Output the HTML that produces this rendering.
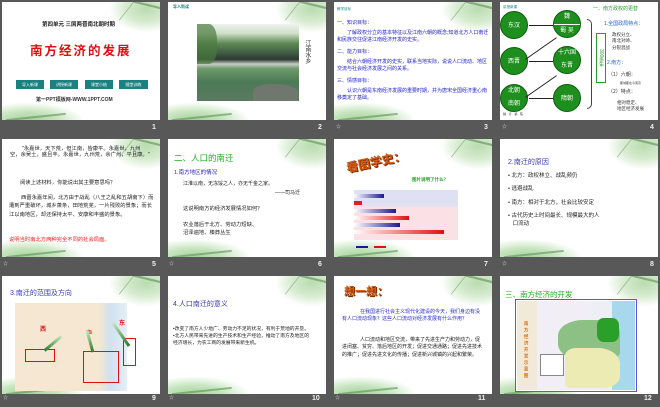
<!DOCTYPE html>
<html><head><meta charset="utf-8"><style>
*{margin:0;padding:0;box-sizing:border-box}
body{width:660px;height:407px;background:#585858;position:relative;overflow:hidden;font-family:"Liberation Sans","Noto Sans CJK SC",sans-serif}
.s{position:absolute;width:158px;height:118px;background:#fff;overflow:hidden}
.s .tr{position:absolute;right:-10px;top:-12px;width:60px;height:42px;background:radial-gradient(ellipse at 60% 45%,#b9dcb0 0%,#d6ebcf 40%,rgba(255,255,255,0) 72%)}
.s .tr:after{content:"";position:absolute;left:14px;top:14px;width:34px;height:18px;border-top:2px solid #6c9a66;border-left:1px solid #7aa873;transform:skewX(-30deg) rotate(12deg);opacity:.7}
.s .bl{position:absolute;left:-12px;bottom:-10px;width:95px;height:28px;background:radial-gradient(ellipse at 40% 70%,#9fcf96 0%,#c8e6c0 38%,rgba(255,255,255,0) 70%)}
.s .bl:after{content:"";position:absolute;left:16px;top:14px;width:60px;height:3px;border-top:2px solid #5e8f5a;transform:rotate(-6deg);opacity:.6}
.n{position:absolute;color:#eee;font-size:7px;font-weight:bold}
.t{position:absolute;white-space:nowrap;line-height:1.15}
.c{position:absolute;width:28px;height:28px;border-radius:50%;background:#1e8f1e;border:1px solid #0b5e0b;color:#fff;font-size:6px;text-align:center;line-height:28px}
</style></head><body>

<!-- slide 1 -->
<div class="s" style="left:2px;top:2px"><div class="tr"></div><div class="bl"></div>
<div class="t" style="left:40px;top:20px;font-size:5.5px;font-weight:bold;color:#222">第四单元 三国两晋南北朝时期</div>
<div class="t" style="left:28px;top:42px;font-size:12.5px;font-weight:bold;color:#e01010;letter-spacing:2px">南方经济的发展</div>
<div style="position:absolute;left:14px;top:78px;width:28px;height:9px;background:#1a8080;color:#fff;font-size:4px;text-align:center;line-height:9px">导入新课</div>
<div style="position:absolute;left:48px;top:78px;width:28px;height:9px;background:#1a8080;color:#fff;font-size:4px;text-align:center;line-height:9px">讲授新课</div>
<div style="position:absolute;left:83px;top:78px;width:28px;height:9px;background:#1a8080;color:#fff;font-size:4px;text-align:center;line-height:9px">课堂小结</div>
<div style="position:absolute;left:117px;top:78px;width:29px;height:9px;background:#1a8080;color:#fff;font-size:4px;text-align:center;line-height:9px">随堂训练</div>
<div class="t" style="left:34px;top:96px;font-size:5px;font-weight:bold;color:#333">第一PPT模板网-WWW.1PPT.COM</div>
</div>
<div class="n" style="left:152px;top:124px">1</div>

<!-- slide 2 -->
<div class="s" style="left:168px;top:2px"><div class="tr"></div><div class="bl"></div>
<div class="t" style="left:5px;top:3px;font-size:4px;color:#1a8080;font-weight:bold">导入新课</div>
<div style="position:absolute;left:29px;top:22px;width:102px;height:77px;background:linear-gradient(180deg,#eef2ee 0%,#cfe0c8 12%,#5f8a55 25%,#3f5a44 38%,#2a3a30 46%,#c8ccc6 52%,#6e9a6c 58%,#4c7a55 75%,#5a7a60 100%)"></div>
<div style="position:absolute;left:29px;top:22px;width:20px;height:40px;background:#4a7a3e;opacity:.7;border-radius:0 40% 40% 0"></div>
<div style="position:absolute;left:85px;top:82px;width:45px;height:17px;background:#6f776f;border-radius:40% 50% 0 0"></div>
<div class="t" style="left:135px;top:38px;font-size:6px;color:#333;writing-mode:vertical-rl">江南水乡</div>
</div>
<div class="n" style="left:318px;top:124px">2</div>

<!-- slide 3 -->
<div class="s" style="left:334px;top:2px"><div class="tr"></div><div class="bl"></div>
<div class="t" style="left:3px;top:5px;font-size:3.5px;color:#1a8080">教学目标</div>
<div class="t" style="left:3px;top:19px;font-size:5px;color:#2020d0">一、知识目标：</div>
<div class="t" style="left:3px;top:28px;font-size:5px;color:#2020d0;white-space:normal;width:152px;text-indent:10px;line-height:1.45">了解政权分立的基本特征以及江南六朝的概念;知道北方人口南迁和民族交往促进江南经济开发的史实。</div>
<div class="t" style="left:3px;top:48px;font-size:5px;color:#2020d0">二、能力目标：</div>
<div class="t" style="left:3px;top:57px;font-size:5px;color:#2020d0;white-space:normal;width:152px;text-indent:10px;line-height:1.45">结合六朝经济开发的史实，联系当地实际，说说人口流动、地区交流与社会经济发展之间的关系。</div>
<div class="t" style="left:3px;top:77px;font-size:5px;color:#2020d0">三、情感目标：</div>
<div class="t" style="left:3px;top:86px;font-size:5px;color:#2020d0;white-space:normal;width:152px;text-indent:10px;line-height:1.45">认识六朝是东南经济发展的重要时期，并为唐宋全国经济重心南移奠定了基础。</div>
</div>
<div class="n" style="left:484px;top:124px">3</div>
<div class="t" style="left:336px;top:125px;font-size:5px;color:#ccc">☆</div>

<!-- slide 4 -->
<div class="s" style="left:500px;top:2px">
<div class="t" style="left:3px;top:3px;font-size:3.5px;color:#1a8080">讲授新课</div>
<div class="c" style="left:0px;top:9px">东汉</div>
<div class="c" style="left:53px;top:8px;line-height:13px">魏<br><span style="border-top:1px solid #fff;display:block;width:100%">蜀 吴</span></div>
<div class="c" style="left:0px;top:45px">西晋</div>
<div class="c" style="left:53px;top:44px;line-height:13px">十六国<br>东晋</div>
<div class="c" style="left:0px;top:82px;line-height:13px">北朝<br>南朝</div>
<div class="c" style="left:53px;top:82px">隋朝</div>
<div style="position:absolute;left:29px;top:23px;width:24px;height:1px;background:#222"></div>
<div style="position:absolute;left:22px;top:46px;width:38px;height:1px;background:#222;transform:rotate(-35deg)"></div>
<div style="position:absolute;left:29px;top:59px;width:24px;height:1px;background:#222"></div>
<div style="position:absolute;left:22px;top:84px;width:38px;height:1px;background:#222;transform:rotate(-35deg)"></div>
<div style="position:absolute;left:29px;top:96px;width:24px;height:1px;background:#222"></div>
<div style="position:absolute;left:87px;top:17px;width:5px;height:90px;border:1px solid #444;border-left:none;border-radius:0 5px 5px 0"></div>
<div style="position:absolute;left:96px;top:31px;width:10px;height:50px;border:1px solid #2a9a2a;font-size:5px;color:#2a9a2a;writing-mode:vertical-rl;text-align:center">300多年</div>
<div class="t" style="left:93px;top:5px;font-size:5px;color:#2a9a2a">一、南方政权的更替</div>
<div class="t" style="left:104px;top:20px;font-size:5px;color:#1f60c0">1.全国政局特点：</div>
<div class="t" style="left:112px;top:30px;font-size:4.5px;color:#333;line-height:1.4">政权分立、<br>南北对峙、<br>分裂混战</div>
<div class="t" style="left:107px;top:59px;font-size:5px;color:#1f60c0">2.南方：</div>
<div class="t" style="left:108px;top:71px;font-size:5px;color:#333">（1）六朝：</div>
<div class="t" style="left:120px;top:80px;font-size:3px;color:#333">都城都在今南京</div>
<div class="t" style="left:108px;top:88px;font-size:5px;color:#333">（2）特点：</div>
<div class="t" style="left:117px;top:98px;font-size:4.5px;color:#333;line-height:1.3">相对稳定、<br>地区经济发展</div>
<div class="t" style="left:3px;top:111px;font-size:3px;color:#333">魏 · 齐 · 梁 · 陈</div>
</div>
<div class="n" style="left:650px;top:124px">4</div>
<div class="t" style="left:502px;top:125px;font-size:5px;color:#ccc">☆</div>

<!-- slide 5 -->
<div class="s" style="left:2px;top:139px"><div class="tr"></div><div class="bl"></div>
<div class="t" style="left:8px;top:7px;font-size:5.3px;color:#222;white-space:normal;width:140px;text-indent:12px;line-height:1.15">"永嘉世，天下荒，但江南，皆康平。永嘉世，九州空，余吴土，盛且丰。永嘉世，九州荒，余广州，平且康。"</div>
<div class="t" style="left:18px;top:41px;font-size:5.3px;color:#222">阅读上述材料，你能说出其主要意思吗？</div>
<div class="t" style="left:7px;top:55px;font-size:5.3px;color:#222;white-space:normal;width:146px;text-indent:12px;line-height:1.6">西晋永嘉年间，北方由于战乱（八王之乱和五胡南下）而遭到严重破坏，城乡萧条，田地荒芜，一片残败的景象；而长江以南地区，却还保持太平、安康和丰盛的景象。</div>
<div class="t" style="left:7px;top:98px;font-size:5.3px;color:#f02020">说明当时南北方两种完全不同的社会局面。</div>
</div>
<div class="n" style="left:152px;top:261px">5</div>
<div class="t" style="left:3px;top:262px;font-size:5px;color:#ccc">☆</div>

<!-- slide 6 -->
<div class="s" style="left:168px;top:139px"><div class="tr"></div><div class="bl"></div>
<div class="t" style="left:6px;top:15px;font-size:8.5px;color:#20b020">二、人口的南迁</div>
<div class="t" style="left:6px;top:31px;font-size:5.5px;color:#2222c0">1.南方地区的情况</div>
<div class="t" style="left:15px;top:43px;font-size:5px;color:#222">江淮以南，无冻馁之人，亦无千金之家。</div>
<div class="t" style="left:107px;top:52px;font-size:5px;color:#222">——司马迁</div>
<div class="t" style="left:15px;top:67px;font-size:5.3px;color:#222">这说明南方的经济发展情况如何？</div>
<div class="t" style="left:15px;top:83px;font-size:5.3px;color:#222;line-height:1.5">农业落后于北方、劳动力短缺、<br>沼泽遍地、榛莽丛生</div>
</div>
<div class="n" style="left:318px;top:261px">6</div>
<div class="t" style="left:169px;top:262px;font-size:5px;color:#ccc">☆</div>

<!-- slide 7 -->
<div class="s" style="left:334px;top:139px"><div class="tr"></div><div class="bl"></div>
<div class="t" style="left:12px;top:17px;font-size:12px;font-weight:bold;color:#d05a10;transform:rotate(-12deg);text-shadow:1px 1px 0 #7a2a00">看图学史：</div>
<div class="t" style="left:78px;top:38px;font-size:4.5px;color:#20a020;font-weight:bold">图片说明了什么？</div>
<div style="position:absolute;left:20px;top:51px;width:104px;height:50px;background:linear-gradient(#e0e0f4 0 33%,#fbe0e6 33% 100%)"></div>
<div style="position:absolute;left:20px;top:55px;width:30px;height:4px;background:linear-gradient(90deg,#fff,#1a1a90)"></div>
<div style="position:absolute;left:20px;top:62px;width:8px;height:4px;background:#e02020"></div>
<div style="position:absolute;left:20px;top:70px;width:42px;height:4px;background:linear-gradient(90deg,#fff,#1a1a90)"></div>
<div style="position:absolute;left:20px;top:77px;width:55px;height:4px;background:linear-gradient(90deg,#fff,#e01010)"></div>
<div style="position:absolute;left:20px;top:84px;width:46px;height:4px;background:linear-gradient(90deg,#fff,#1a1a90)"></div>
<div style="position:absolute;left:20px;top:91px;width:90px;height:4px;background:linear-gradient(90deg,#fff,#e01010)"></div>
<div style="position:absolute;left:22px;top:107px;width:12px;height:2px;background:#1a1a90"></div>
<div style="position:absolute;left:40px;top:107px;width:12px;height:2px;background:#e01010"></div>
</div>
<div class="n" style="left:484px;top:261px">7</div>

<!-- slide 8 -->
<div class="s" style="left:500px;top:139px"><div class="tr"></div><div class="bl"></div>
<div class="t" style="left:8px;top:20px;font-size:7px;color:#3a3ab0">2.南迁的原因</div>
<div class="t" style="left:8px;top:34px;font-size:5.5px;color:#222;line-height:1.1">• 北方：政权林立、战乱频仍</div>
<div class="t" style="left:8px;top:47px;font-size:5.5px;color:#222">• 逃避战乱</div>
<div class="t" style="left:8px;top:61px;font-size:5.5px;color:#222">• 南方：相对于北方，社会比较安定</div>
<div class="t" style="left:8px;top:74px;font-size:5.5px;color:#222;line-height:1.4">• 古代历史上时间最长、规模最大的人<br>&nbsp;&nbsp;&nbsp;口流动</div>
</div>
<div class="n" style="left:650px;top:261px">8</div>
<div class="t" style="left:502px;top:262px;font-size:5px;color:#ccc">☆</div>

<!-- slide 9 -->
<div class="s" style="left:2px;top:276px"><div class="tr"></div><div class="bl"></div>
<div class="t" style="left:8px;top:14px;font-size:7px;color:#3a3ab0">3.南迁的范围及方向</div>
<div style="position:absolute;left:13px;top:27px;width:112px;height:88px;background:linear-gradient(90deg,#f6e7d2 0 75%,#cfe1f0 85%,#e6eef6 100%)"></div>
<div class="t" style="left:38px;top:51px;font-size:6px;color:#e01010;font-weight:bold">西</div>
<div class="t" style="left:84px;top:55px;font-size:6px;color:#e01010;font-weight:bold">中</div>
<div class="t" style="left:117px;top:45px;font-size:6px;color:#e01010;font-weight:bold">东</div>
<div style="position:absolute;left:23px;top:73px;width:30px;height:13px;border:1px solid #e01010"></div>
<div style="position:absolute;left:81px;top:75px;width:36px;height:32px;border:1px solid #e01010"></div>
<div style="position:absolute;left:121px;top:62px;width:13px;height:28px;border:1px solid #e01010"></div>
<div style="position:absolute;left:40px;top:66px;width:22px;height:3px;background:linear-gradient(90deg,#2a7a2a,#c8e6c0);transform:rotate(-40deg)"></div>
<div style="position:absolute;left:77px;top:64px;width:22px;height:3px;background:linear-gradient(90deg,#c8e6c0,#2a7a2a);transform:rotate(75deg)"></div>
<div style="position:absolute;left:105px;top:57px;width:28px;height:3px;background:linear-gradient(90deg,#c8e6c0,#2a7a2a);transform:rotate(55deg)"></div>
</div>
<div class="n" style="left:152px;top:395px">9</div>
<div class="t" style="left:3px;top:396px;font-size:5px;color:#ccc">☆</div>

<!-- slide 10 -->
<div class="s" style="left:168px;top:276px"><div class="tr"></div><div class="bl"></div>
<div class="t" style="left:5px;top:25px;font-size:7px;color:#3a3ab0">4.人口南迁的意义</div>
<div class="t" style="left:5px;top:50px;font-size:4.8px;color:#222;white-space:normal;width:140px;line-height:1.5">•改变了南方人少地广、劳动力不足的状况，有利于荒地的开垦。<br>•北方人民带来先进的生产技术和生产经验，推动了南方及地区的经济增长，为农工商的发展带来新生机。</div>
</div>
<div class="n" style="left:312px;top:395px">10</div>
<div class="t" style="left:169px;top:396px;font-size:5px;color:#ccc">☆</div>

<!-- slide 11 -->
<div class="s" style="left:334px;top:276px"><div class="tr"></div><div class="bl"></div>
<div class="t" style="left:10px;top:10px;font-size:11px;font-weight:bold;color:#d05a10;text-shadow:1px 1px 0 #7a2a00">想一想：</div>
<div class="t" style="left:8px;top:33px;font-size:5px;color:#2a2ad0;white-space:normal;width:140px;text-indent:18px;line-height:1.4">在我国进行社会主义现代化建设的今天，我们身边有没有人口流动现象？这些人口流动对经济发展有什么作用？</div>
<div class="t" style="left:8px;top:61px;font-size:5px;color:#222;white-space:normal;width:140px;text-indent:18px;line-height:1.45">人口流动和地区交流，带来了先进生产力和劳动力，促进闭塞、贫穷、落后地区的开发；促进交通通路；促进先进技术的推广；促进先进文化的传播；促进新兴城镇的兴起和繁荣。</div>
</div>
<div class="n" style="left:478px;top:395px">11</div>
<div class="t" style="left:335px;top:396px;font-size:5px;color:#ccc">☆</div>

<!-- slide 12 -->
<div class="s" style="left:500px;top:276px"><div class="tr"></div><div class="bl"></div>
<div class="t" style="left:5px;top:15px;font-size:7.5px;color:#20b020">三、南方经济的开发</div>
<div style="position:absolute;left:15px;top:23px;width:122px;height:93px;border:1.5px solid #5a5ad0;background:#fff"></div>
<div style="position:absolute;left:17px;top:25px;width:20px;height:89px;background:#f2ead8"></div>
<div class="t" style="left:24px;top:45px;font-size:4.5px;color:#e07010;writing-mode:vertical-rl;letter-spacing:2px;font-weight:bold">南方经济开发示意图</div>
<div style="position:absolute;left:37px;top:25px;width:98px;height:89px;background:linear-gradient(90deg,#f2eef6 0 40%,#e8f0f4 100%)"></div>
<div style="position:absolute;left:112px;top:25px;width:23px;height:89px;background:#a8d8ec"></div>
<div style="position:absolute;left:58px;top:44px;width:62px;height:40px;background:#8cc084;border-radius:40% 30% 20% 40%"></div>
<div style="position:absolute;left:97px;top:42px;width:22px;height:24px;background:#2aa02a;border-radius:30%"></div>
<div style="position:absolute;left:65px;top:72px;width:55px;height:40px;background:#ecebb4;border-radius:20% 40% 30% 10%"></div>
<div style="position:absolute;left:40px;top:78px;width:24px;height:22px;background:#fff;border:1px solid #888"></div>
</div>
<div class="n" style="left:644px;top:395px">12</div>
</body></html>
